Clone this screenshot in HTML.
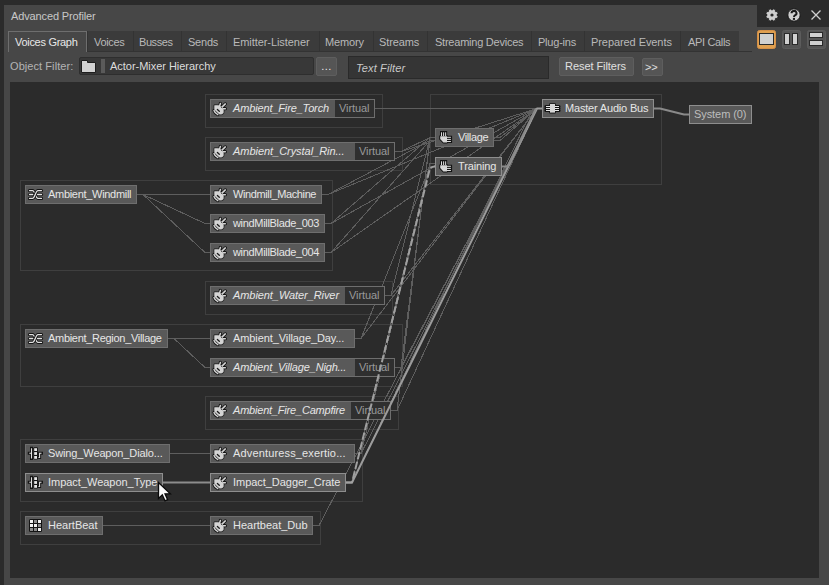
<!DOCTYPE html>
<html><head><meta charset="utf-8"><style>
html,body{margin:0;padding:0;}
body{width:829px;height:585px;overflow:hidden;background:#2b2b2b;position:relative;font-family:"Liberation Sans", sans-serif;}
.a{position:absolute;}
.t{font-size:11px;white-space:nowrap;}
</style></head><body>
<div class="a" style="left:4px;top:5px;width:753px;height:22px;background:#474747;"></div>
<div class="a" style="left:4px;top:27px;width:825px;height:558px;background:#474747;"></div>
<div class="a t" style="left:11px;top:9.19px;font-size:11px;line-height:14px;color:#c8c8c8;letter-spacing:-0.133px;">Advanced Profiler</div>
<svg class="a" style="left:757px;top:0px" width="72" height="27" viewBox="757 0 72 27">
<g fill="#cfcfcf" stroke="#1e1e1e" stroke-width="0.8">
<path d="M776.98 15.41 L778.18 16.21 L777.23 18.52 L775.82 18.23 L775.23 18.82 L775.52 20.23 L773.21 21.18 L772.41 19.98 L771.59 19.98 L770.79 21.18 L768.48 20.23 L768.77 18.82 L768.18 18.23 L766.77 18.52 L765.82 16.21 L767.02 15.41 L767.02 14.59 L765.82 13.79 L766.77 11.48 L768.18 11.77 L768.77 11.18 L768.48 9.77 L770.79 8.82 L771.59 10.02 L772.41 10.02 L773.21 8.82 L775.52 9.77 L775.23 11.18 L775.82 11.77 L777.23 11.48 L778.18 13.79 L776.98 14.59Z"/>
</g>
<circle cx="772" cy="15" r="1.6" fill="#2a2a2a"/>
<circle cx="794" cy="15" r="6.2" fill="#cfcfcf" stroke="#141414" stroke-width="1"/>
<path d="M791.5 13.2a2.5 2.3 0 1 1 3.5 2.1c-.7.4-1 .8-1 1.6" fill="none" stroke="#1a1a1a" stroke-width="2"/>
<rect x="792.9" y="17.9" width="2.1" height="2" fill="#1a1a1a"/>
<path d="M811.5 10.5l9 9M820.5 10.5l-9 9" stroke="#d0d0d0" stroke-width="1.3"/>
</svg>
<div class="a" style="left:87px;top:31px;width:46px;height:20px;background:#3b3b3b;border-left:1px solid #333;box-sizing:border-box;"></div>
<div class="a t" style="left:94px;top:35.19px;font-size:11px;line-height:14px;color:#b9b9b9;letter-spacing:-0.324px;">Voices</div>
<div class="a" style="left:133px;top:31px;width:48px;height:20px;background:#3b3b3b;border-left:1px solid #333;box-sizing:border-box;"></div>
<div class="a t" style="left:139px;top:35.19px;font-size:11px;line-height:14px;color:#b9b9b9;letter-spacing:-0.416px;">Busses</div>
<div class="a" style="left:181px;top:31px;width:45px;height:20px;background:#3b3b3b;border-left:1px solid #333;box-sizing:border-box;"></div>
<div class="a t" style="left:188px;top:35.19px;font-size:11px;line-height:14px;color:#b9b9b9;letter-spacing:-0.226px;">Sends</div>
<div class="a" style="left:226px;top:31px;width:93px;height:20px;background:#3b3b3b;border-left:1px solid #333;box-sizing:border-box;"></div>
<div class="a t" style="left:233px;top:35.19px;font-size:11px;line-height:14px;color:#b9b9b9;letter-spacing:-0.069px;">Emitter-Listener</div>
<div class="a" style="left:319px;top:31px;width:54px;height:20px;background:#3b3b3b;border-left:1px solid #333;box-sizing:border-box;"></div>
<div class="a t" style="left:325px;top:35.19px;font-size:11px;line-height:14px;color:#b9b9b9;letter-spacing:-0.167px;">Memory</div>
<div class="a" style="left:373px;top:31px;width:54px;height:20px;background:#3b3b3b;border-left:1px solid #333;box-sizing:border-box;"></div>
<div class="a t" style="left:379px;top:35.19px;font-size:11px;line-height:14px;color:#b9b9b9;letter-spacing:-0.111px;">Streams</div>
<div class="a" style="left:427px;top:31px;width:104px;height:20px;background:#3b3b3b;border-left:1px solid #333;box-sizing:border-box;"></div>
<div class="a t" style="left:435px;top:35.19px;font-size:11px;line-height:14px;color:#b9b9b9;letter-spacing:-0.233px;">Streaming Devices</div>
<div class="a" style="left:531px;top:31px;width:53px;height:20px;background:#3b3b3b;border-left:1px solid #333;box-sizing:border-box;"></div>
<div class="a t" style="left:538px;top:35.19px;font-size:11px;line-height:14px;color:#b9b9b9;letter-spacing:-0.221px;">Plug-ins</div>
<div class="a" style="left:584px;top:31px;width:96px;height:20px;background:#3b3b3b;border-left:1px solid #333;box-sizing:border-box;"></div>
<div class="a t" style="left:591px;top:35.19px;font-size:11px;line-height:14px;color:#b9b9b9;letter-spacing:-0.074px;">Prepared Events</div>
<div class="a" style="left:680px;top:31px;width:59px;height:20px;background:#3b3b3b;border-left:1px solid #333;box-sizing:border-box;"></div>
<div class="a t" style="left:688px;top:35.19px;font-size:11px;line-height:14px;color:#b9b9b9;letter-spacing:-0.344px;">API Calls</div>
<div class="a" style="left:8px;top:51px;width:744px;height:1px;background:#333;"></div>
<div class="a" style="left:8px;top:31px;width:79px;height:21px;background:#474747;border:1px solid #6e6e6e;border-bottom:none;box-sizing:border-box;"></div>
<div class="a t" style="left:15px;top:35.19px;font-size:11px;line-height:14px;color:#e8e8e8;letter-spacing:-0.295px;">Voices Graph</div>
<svg class="a" style="left:756px;top:29px" width="72" height="22" viewBox="756 29 72 22">
<rect x="757.5" y="30.5" width="18" height="18" rx="2" fill="#e0a050" stroke="#d49048"/>
<rect x="759.5" y="33.5" width="14" height="11" fill="#d0d0d0" stroke="#2a2a2a" stroke-width="1"/>
<rect x="782.5" y="30.5" width="18" height="18" rx="2" fill="#555" stroke="#5c5c5c"/>
<rect x="784.5" y="33.5" width="5" height="11" fill="#d0d0d0" stroke="#2a2a2a"/>
<rect x="792.5" y="33.5" width="5" height="11" fill="#d0d0d0" stroke="#2a2a2a"/>
<rect x="807.5" y="30.5" width="18" height="18" rx="2" fill="#555" stroke="#5c5c5c"/>
<rect x="809.5" y="32.5" width="13" height="5" fill="#d0d0d0" stroke="#2a2a2a"/>
<rect x="809.5" y="40.5" width="13" height="5" fill="#d0d0d0" stroke="#2a2a2a"/>
</svg>
<div class="a t" style="left:10px;top:59.19px;font-size:11px;line-height:14px;color:#b4b4b4;letter-spacing:0.069px;">Object Filter:</div>
<div class="a" style="left:79px;top:57px;width:235px;height:18px;background:#383838;border:1px solid #2e2e2e;box-sizing:border-box;border-radius:2px;"></div>
<svg class="a" style="left:80px;top:59px" width="18" height="16" viewBox="80 59 18 16">
<path d="M81.5 60.5H87.5V62.5H95.5V72.5H81.5Z" fill="#d2d2d2" stroke="#1e1e1e" stroke-width="1"/>
</svg>
<div class="a" style="left:101px;top:59px;width:4px;height:14px;background:#5a5a5a;"></div>
<div class="a t" style="left:110px;top:59.19px;font-size:11px;line-height:14px;color:#dcdcdc;letter-spacing:-0.028px;">Actor-Mixer Hierarchy</div>
<div class="a" style="left:316px;top:57px;width:21px;height:19px;background:#555;border:1px solid #5e5e5e;box-sizing:border-box;border-radius:2px;"></div>
<div class="a t" style="left:316px;top:57px;width:21px;height:19px;line-height:19px;text-align:center;color:#e8e8e8;font-size:11px;letter-spacing:0.5px">...</div>
<div class="a" style="left:348px;top:56px;width:201px;height:23px;background:#353535;border:1px solid #2a2a2a;box-sizing:border-box;"></div>
<div class="a t" style="left:356px;top:61.19px;font-size:11px;line-height:14px;color:#c8c8c8;font-style:italic;letter-spacing:0.121px;">Text Filter</div>
<div class="a" style="left:559px;top:57px;width:75px;height:19px;background:#555;border:1px solid #5e5e5e;box-sizing:border-box;border-radius:2px;"></div>
<div class="a t" style="left:565px;top:59.19px;font-size:11px;line-height:14px;color:#e0e0e0;letter-spacing:-0.062px;">Reset Filters</div>
<div class="a" style="left:642px;top:58px;width:21px;height:18px;background:#555;border:1px solid #5e5e5e;box-sizing:border-box;border-radius:2px;"></div>
<div class="a t" style="left:645px;top:60.19px;font-size:11px;line-height:14px;color:#e0e0e0;letter-spacing:-0.2px;">&gt;&gt;</div>
<div class="a" style="left:10px;top:82px;width:809px;height:496px;background:#2b2b2b;"></div>
<div class="a" style="left:205px;top:94px;width:178px;height:34px;border:1px solid #3f3f3f;box-sizing:border-box;"></div>
<div class="a" style="left:205px;top:137px;width:198px;height:34px;border:1px solid #3f3f3f;box-sizing:border-box;"></div>
<div class="a" style="left:20px;top:180px;width:313px;height:91px;border:1px solid #3f3f3f;box-sizing:border-box;"></div>
<div class="a" style="left:205px;top:281px;width:188px;height:34px;border:1px solid #3f3f3f;box-sizing:border-box;"></div>
<div class="a" style="left:20px;top:324px;width:383px;height:63px;border:1px solid #3f3f3f;box-sizing:border-box;"></div>
<div class="a" style="left:205px;top:396px;width:194px;height:34px;border:1px solid #3f3f3f;box-sizing:border-box;"></div>
<div class="a" style="left:20px;top:439px;width:343px;height:63px;border:1px solid #3f3f3f;box-sizing:border-box;"></div>
<div class="a" style="left:20px;top:511px;width:301px;height:34px;border:1px solid #3f3f3f;box-sizing:border-box;"></div>
<div class="a" style="left:430px;top:94px;width:232px;height:91px;border:1px solid #3f3f3f;box-sizing:border-box;"></div>
<svg class="a" style="left:0;top:0" width="829" height="585"><g fill="none" stroke="#5e5e5e" stroke-width="1" shape-rendering="crispEdges"><path d="M375 108.5H381L537 108.5H542"/><path d="M395 151.5H401L537 108.5H542"/><path d="M322 194.5H328L537 108.5H542"/><path d="M325 223.5H331L537 108.5H542"/><path d="M325 252.5H331L537 108.5H542"/><path d="M385 295.5H391L537 108.5H542"/><path d="M355 338.5H361L537 108.5H542"/><path d="M395 367.5H401L537 108.5H542"/><path d="M391 410.5H397L537 108.5H542"/><path d="M355 453.5H361L537 108.5H542"/><path d="M313 525.5H319L537 108.5H542"/><path d="M395 151.5H401L430 137.5H435"/><path d="M322 194.5H328L430 140.5H435"/><path d="M325 223.5H331L430 137.5H435"/><path d="M325 252.5H331L430 140.5H435"/><path d="M385 295.5H391L430 137.5H435"/><path d="M395 367.5H401L430 140.5H435"/><path d="M391 410.5H397L430 137.5H435"/><path d="M355 338.5H361L430 166.5H435"/><path d="M355 453.5H361L430 166.5H435"/><path d="M346 482.5H352L533 108.5H538"/><path d="M346 482.5H352L430 163.5H435"/><path d="M494 137.5H500L537 108.5"/><path d="M494 140.5H500L537 108.5"/><path d="M137 194.5H143L205 194.5H210"/><path d="M137 194.5H143L205 223.5H210"/><path d="M137 194.5H143L205 252.5H210"/><path d="M168 338.5H174L205 338.5H210"/><path d="M168 338.5H174L205 367.5H210"/><path d="M170 453.5H176L205 453.5H210"/><path d="M103 525.5H109L205 525.5H210"/></g></svg>
<div class="a" style="left:210px;top:99px;width:165px;height:19px;background:#595959;border:1px solid #6e6e6e;box-sizing:border-box;"></div>
<div class="a" style="left:335px;top:100px;width:39px;height:17px;background:#2f2f2f;"></div>
<div class="a t" style="left:339px;top:101.19px;font-size:11px;line-height:14px;color:#9a9a9a;letter-spacing:-0.081px;">Virtual</div>
<svg class="a" style="left:210px;top:99px" width="20" height="19" viewBox="0 0 20 19"><g stroke="#141414" stroke-width="3.3" stroke-linecap="round" fill="none"><path d="M9.4 7.6L10.4 4.5M11.7 8.4L15.3 4.9M12 9.8L15.3 9.7M4 11.6Q4.9 14.4 7.8 15.6"/></g>
<path d="M4.6 6.6L8.8 6.4L12.6 9L13.4 11.5L13.2 14.2L11.2 15.2L9.2 15L4.6 10.6Z" fill="#141414" stroke="#141414" stroke-width="2" stroke-linejoin="round"/>
<path d="M4.6 6.6L8.8 6.4L12.6 9L13.4 11.5L13.2 14.2L11.2 15.2L9.2 15L4.6 10.6Z" fill="#d4d4d4" stroke="#d4d4d4" stroke-width="0.6" stroke-linejoin="round"/>
<g stroke="#d4d4d4" stroke-width="1.5" stroke-linecap="round" fill="none"><path d="M9.4 7.6L10.4 4.5M11.7 8.4L15.3 4.9M12 9.8L15.3 9.7M4 11.6Q4.9 14.4 7.8 15.6"/></g>
<path d="M7.4 10.5L9.3 12.3" stroke="#1a1a1a" stroke-width="1.3" stroke-linecap="round"/>
<path d="M11.2 8.2L12.2 9.1" stroke="#141414" stroke-width="0.8"/></svg>
<div class="a t" style="left:233px;top:101.19px;font-size:11px;line-height:14px;color:#e6e6e6;font-style:italic;letter-spacing:-0.149px;">Ambient_Fire_Torch</div>
<div class="a" style="left:210px;top:142px;width:185px;height:19px;background:#595959;border:1px solid #6e6e6e;box-sizing:border-box;"></div>
<div class="a" style="left:355px;top:143px;width:39px;height:17px;background:#2f2f2f;"></div>
<div class="a t" style="left:359px;top:144.19px;font-size:11px;line-height:14px;color:#9a9a9a;letter-spacing:-0.081px;">Virtual</div>
<svg class="a" style="left:210px;top:142px" width="20" height="19" viewBox="0 0 20 19"><g stroke="#141414" stroke-width="3.3" stroke-linecap="round" fill="none"><path d="M9.4 7.6L10.4 4.5M11.7 8.4L15.3 4.9M12 9.8L15.3 9.7M4 11.6Q4.9 14.4 7.8 15.6"/></g>
<path d="M4.6 6.6L8.8 6.4L12.6 9L13.4 11.5L13.2 14.2L11.2 15.2L9.2 15L4.6 10.6Z" fill="#141414" stroke="#141414" stroke-width="2" stroke-linejoin="round"/>
<path d="M4.6 6.6L8.8 6.4L12.6 9L13.4 11.5L13.2 14.2L11.2 15.2L9.2 15L4.6 10.6Z" fill="#d4d4d4" stroke="#d4d4d4" stroke-width="0.6" stroke-linejoin="round"/>
<g stroke="#d4d4d4" stroke-width="1.5" stroke-linecap="round" fill="none"><path d="M9.4 7.6L10.4 4.5M11.7 8.4L15.3 4.9M12 9.8L15.3 9.7M4 11.6Q4.9 14.4 7.8 15.6"/></g>
<path d="M7.4 10.5L9.3 12.3" stroke="#1a1a1a" stroke-width="1.3" stroke-linecap="round"/>
<path d="M11.2 8.2L12.2 9.1" stroke="#141414" stroke-width="0.8"/></svg>
<div class="a t" style="left:233px;top:144.19px;font-size:11px;line-height:14px;color:#e6e6e6;font-style:italic;letter-spacing:-0.043px;">Ambient_Crystal_Rin...</div>
<div class="a" style="left:210px;top:185px;width:112px;height:19px;background:#595959;border:1px solid #6e6e6e;box-sizing:border-box;"></div>
<svg class="a" style="left:210px;top:185px" width="20" height="19" viewBox="0 0 20 19"><g stroke="#141414" stroke-width="3.3" stroke-linecap="round" fill="none"><path d="M9.4 7.6L10.4 4.5M11.7 8.4L15.3 4.9M12 9.8L15.3 9.7M4 11.6Q4.9 14.4 7.8 15.6"/></g>
<path d="M4.6 6.6L8.8 6.4L12.6 9L13.4 11.5L13.2 14.2L11.2 15.2L9.2 15L4.6 10.6Z" fill="#141414" stroke="#141414" stroke-width="2" stroke-linejoin="round"/>
<path d="M4.6 6.6L8.8 6.4L12.6 9L13.4 11.5L13.2 14.2L11.2 15.2L9.2 15L4.6 10.6Z" fill="#d4d4d4" stroke="#d4d4d4" stroke-width="0.6" stroke-linejoin="round"/>
<g stroke="#d4d4d4" stroke-width="1.5" stroke-linecap="round" fill="none"><path d="M9.4 7.6L10.4 4.5M11.7 8.4L15.3 4.9M12 9.8L15.3 9.7M4 11.6Q4.9 14.4 7.8 15.6"/></g>
<path d="M7.4 10.5L9.3 12.3" stroke="#1a1a1a" stroke-width="1.3" stroke-linecap="round"/>
<path d="M11.2 8.2L12.2 9.1" stroke="#141414" stroke-width="0.8"/></svg>
<div class="a t" style="left:233px;top:187.19px;font-size:11px;line-height:14px;color:#e6e6e6;letter-spacing:-0.384px;">Windmill_Machine</div>
<div class="a" style="left:210px;top:214px;width:115px;height:19px;background:#595959;border:1px solid #6e6e6e;box-sizing:border-box;"></div>
<svg class="a" style="left:210px;top:214px" width="20" height="19" viewBox="0 0 20 19"><g stroke="#141414" stroke-width="3.3" stroke-linecap="round" fill="none"><path d="M9.4 7.6L10.4 4.5M11.7 8.4L15.3 4.9M12 9.8L15.3 9.7M4 11.6Q4.9 14.4 7.8 15.6"/></g>
<path d="M4.6 6.6L8.8 6.4L12.6 9L13.4 11.5L13.2 14.2L11.2 15.2L9.2 15L4.6 10.6Z" fill="#141414" stroke="#141414" stroke-width="2" stroke-linejoin="round"/>
<path d="M4.6 6.6L8.8 6.4L12.6 9L13.4 11.5L13.2 14.2L11.2 15.2L9.2 15L4.6 10.6Z" fill="#d4d4d4" stroke="#d4d4d4" stroke-width="0.6" stroke-linejoin="round"/>
<g stroke="#d4d4d4" stroke-width="1.5" stroke-linecap="round" fill="none"><path d="M9.4 7.6L10.4 4.5M11.7 8.4L15.3 4.9M12 9.8L15.3 9.7M4 11.6Q4.9 14.4 7.8 15.6"/></g>
<path d="M7.4 10.5L9.3 12.3" stroke="#1a1a1a" stroke-width="1.3" stroke-linecap="round"/>
<path d="M11.2 8.2L12.2 9.1" stroke="#141414" stroke-width="0.8"/></svg>
<div class="a t" style="left:233px;top:216.19px;font-size:11px;line-height:14px;color:#e6e6e6;letter-spacing:-0.327px;">windMillBlade_003</div>
<div class="a" style="left:210px;top:243px;width:115px;height:19px;background:#595959;border:1px solid #6e6e6e;box-sizing:border-box;"></div>
<svg class="a" style="left:210px;top:243px" width="20" height="19" viewBox="0 0 20 19"><g stroke="#141414" stroke-width="3.3" stroke-linecap="round" fill="none"><path d="M9.4 7.6L10.4 4.5M11.7 8.4L15.3 4.9M12 9.8L15.3 9.7M4 11.6Q4.9 14.4 7.8 15.6"/></g>
<path d="M4.6 6.6L8.8 6.4L12.6 9L13.4 11.5L13.2 14.2L11.2 15.2L9.2 15L4.6 10.6Z" fill="#141414" stroke="#141414" stroke-width="2" stroke-linejoin="round"/>
<path d="M4.6 6.6L8.8 6.4L12.6 9L13.4 11.5L13.2 14.2L11.2 15.2L9.2 15L4.6 10.6Z" fill="#d4d4d4" stroke="#d4d4d4" stroke-width="0.6" stroke-linejoin="round"/>
<g stroke="#d4d4d4" stroke-width="1.5" stroke-linecap="round" fill="none"><path d="M9.4 7.6L10.4 4.5M11.7 8.4L15.3 4.9M12 9.8L15.3 9.7M4 11.6Q4.9 14.4 7.8 15.6"/></g>
<path d="M7.4 10.5L9.3 12.3" stroke="#1a1a1a" stroke-width="1.3" stroke-linecap="round"/>
<path d="M11.2 8.2L12.2 9.1" stroke="#141414" stroke-width="0.8"/></svg>
<div class="a t" style="left:233px;top:245.19px;font-size:11px;line-height:14px;color:#e6e6e6;letter-spacing:-0.327px;">windMillBlade_004</div>
<div class="a" style="left:210px;top:286px;width:175px;height:19px;background:#595959;border:1px solid #6e6e6e;box-sizing:border-box;"></div>
<div class="a" style="left:345px;top:287px;width:39px;height:17px;background:#2f2f2f;"></div>
<div class="a t" style="left:349px;top:288.19px;font-size:11px;line-height:14px;color:#9a9a9a;letter-spacing:-0.081px;">Virtual</div>
<svg class="a" style="left:210px;top:286px" width="20" height="19" viewBox="0 0 20 19"><g stroke="#141414" stroke-width="3.3" stroke-linecap="round" fill="none"><path d="M9.4 7.6L10.4 4.5M11.7 8.4L15.3 4.9M12 9.8L15.3 9.7M4 11.6Q4.9 14.4 7.8 15.6"/></g>
<path d="M4.6 6.6L8.8 6.4L12.6 9L13.4 11.5L13.2 14.2L11.2 15.2L9.2 15L4.6 10.6Z" fill="#141414" stroke="#141414" stroke-width="2" stroke-linejoin="round"/>
<path d="M4.6 6.6L8.8 6.4L12.6 9L13.4 11.5L13.2 14.2L11.2 15.2L9.2 15L4.6 10.6Z" fill="#d4d4d4" stroke="#d4d4d4" stroke-width="0.6" stroke-linejoin="round"/>
<g stroke="#d4d4d4" stroke-width="1.5" stroke-linecap="round" fill="none"><path d="M9.4 7.6L10.4 4.5M11.7 8.4L15.3 4.9M12 9.8L15.3 9.7M4 11.6Q4.9 14.4 7.8 15.6"/></g>
<path d="M7.4 10.5L9.3 12.3" stroke="#1a1a1a" stroke-width="1.3" stroke-linecap="round"/>
<path d="M11.2 8.2L12.2 9.1" stroke="#141414" stroke-width="0.8"/></svg>
<div class="a t" style="left:233px;top:288.19px;font-size:11px;line-height:14px;color:#e6e6e6;font-style:italic;letter-spacing:-0.073px;">Ambient_Water_River</div>
<div class="a" style="left:210px;top:329px;width:145px;height:19px;background:#595959;border:1px solid #6e6e6e;box-sizing:border-box;"></div>
<svg class="a" style="left:210px;top:329px" width="20" height="19" viewBox="0 0 20 19"><g stroke="#141414" stroke-width="3.3" stroke-linecap="round" fill="none"><path d="M9.4 7.6L10.4 4.5M11.7 8.4L15.3 4.9M12 9.8L15.3 9.7M4 11.6Q4.9 14.4 7.8 15.6"/></g>
<path d="M4.6 6.6L8.8 6.4L12.6 9L13.4 11.5L13.2 14.2L11.2 15.2L9.2 15L4.6 10.6Z" fill="#141414" stroke="#141414" stroke-width="2" stroke-linejoin="round"/>
<path d="M4.6 6.6L8.8 6.4L12.6 9L13.4 11.5L13.2 14.2L11.2 15.2L9.2 15L4.6 10.6Z" fill="#d4d4d4" stroke="#d4d4d4" stroke-width="0.6" stroke-linejoin="round"/>
<g stroke="#d4d4d4" stroke-width="1.5" stroke-linecap="round" fill="none"><path d="M9.4 7.6L10.4 4.5M11.7 8.4L15.3 4.9M12 9.8L15.3 9.7M4 11.6Q4.9 14.4 7.8 15.6"/></g>
<path d="M7.4 10.5L9.3 12.3" stroke="#1a1a1a" stroke-width="1.3" stroke-linecap="round"/>
<path d="M11.2 8.2L12.2 9.1" stroke="#141414" stroke-width="0.8"/></svg>
<div class="a t" style="left:233px;top:331.19px;font-size:11px;line-height:14px;color:#e6e6e6;letter-spacing:-0.092px;">Ambient_Village_Day...</div>
<div class="a" style="left:210px;top:358px;width:185px;height:19px;background:#595959;border:1px solid #6e6e6e;box-sizing:border-box;"></div>
<div class="a" style="left:355px;top:359px;width:39px;height:17px;background:#2f2f2f;"></div>
<div class="a t" style="left:359px;top:360.19px;font-size:11px;line-height:14px;color:#9a9a9a;letter-spacing:-0.081px;">Virtual</div>
<svg class="a" style="left:210px;top:358px" width="20" height="19" viewBox="0 0 20 19"><g stroke="#141414" stroke-width="3.3" stroke-linecap="round" fill="none"><path d="M9.4 7.6L10.4 4.5M11.7 8.4L15.3 4.9M12 9.8L15.3 9.7M4 11.6Q4.9 14.4 7.8 15.6"/></g>
<path d="M4.6 6.6L8.8 6.4L12.6 9L13.4 11.5L13.2 14.2L11.2 15.2L9.2 15L4.6 10.6Z" fill="#141414" stroke="#141414" stroke-width="2" stroke-linejoin="round"/>
<path d="M4.6 6.6L8.8 6.4L12.6 9L13.4 11.5L13.2 14.2L11.2 15.2L9.2 15L4.6 10.6Z" fill="#d4d4d4" stroke="#d4d4d4" stroke-width="0.6" stroke-linejoin="round"/>
<g stroke="#d4d4d4" stroke-width="1.5" stroke-linecap="round" fill="none"><path d="M9.4 7.6L10.4 4.5M11.7 8.4L15.3 4.9M12 9.8L15.3 9.7M4 11.6Q4.9 14.4 7.8 15.6"/></g>
<path d="M7.4 10.5L9.3 12.3" stroke="#1a1a1a" stroke-width="1.3" stroke-linecap="round"/>
<path d="M11.2 8.2L12.2 9.1" stroke="#141414" stroke-width="0.8"/></svg>
<div class="a t" style="left:233px;top:360.19px;font-size:11px;line-height:14px;color:#e6e6e6;font-style:italic;letter-spacing:-0.173px;">Ambient_Village_Nigh...</div>
<div class="a" style="left:210px;top:401px;width:181px;height:19px;background:#595959;border:1px solid #6e6e6e;box-sizing:border-box;"></div>
<div class="a" style="left:351px;top:402px;width:39px;height:17px;background:#2f2f2f;"></div>
<div class="a t" style="left:355px;top:403.19px;font-size:11px;line-height:14px;color:#9a9a9a;letter-spacing:-0.081px;">Virtual</div>
<svg class="a" style="left:210px;top:401px" width="20" height="19" viewBox="0 0 20 19"><g stroke="#141414" stroke-width="3.3" stroke-linecap="round" fill="none"><path d="M9.4 7.6L10.4 4.5M11.7 8.4L15.3 4.9M12 9.8L15.3 9.7M4 11.6Q4.9 14.4 7.8 15.6"/></g>
<path d="M4.6 6.6L8.8 6.4L12.6 9L13.4 11.5L13.2 14.2L11.2 15.2L9.2 15L4.6 10.6Z" fill="#141414" stroke="#141414" stroke-width="2" stroke-linejoin="round"/>
<path d="M4.6 6.6L8.8 6.4L12.6 9L13.4 11.5L13.2 14.2L11.2 15.2L9.2 15L4.6 10.6Z" fill="#d4d4d4" stroke="#d4d4d4" stroke-width="0.6" stroke-linejoin="round"/>
<g stroke="#d4d4d4" stroke-width="1.5" stroke-linecap="round" fill="none"><path d="M9.4 7.6L10.4 4.5M11.7 8.4L15.3 4.9M12 9.8L15.3 9.7M4 11.6Q4.9 14.4 7.8 15.6"/></g>
<path d="M7.4 10.5L9.3 12.3" stroke="#1a1a1a" stroke-width="1.3" stroke-linecap="round"/>
<path d="M11.2 8.2L12.2 9.1" stroke="#141414" stroke-width="0.8"/></svg>
<div class="a t" style="left:233px;top:403.19px;font-size:11px;line-height:14px;color:#e6e6e6;font-style:italic;letter-spacing:-0.203px;">Ambient_Fire_Campfire</div>
<div class="a" style="left:210px;top:444px;width:145px;height:19px;background:#595959;border:1px solid #6e6e6e;box-sizing:border-box;"></div>
<svg class="a" style="left:210px;top:444px" width="20" height="19" viewBox="0 0 20 19"><g stroke="#141414" stroke-width="3.3" stroke-linecap="round" fill="none"><path d="M9.4 7.6L10.4 4.5M11.7 8.4L15.3 4.9M12 9.8L15.3 9.7M4 11.6Q4.9 14.4 7.8 15.6"/></g>
<path d="M4.6 6.6L8.8 6.4L12.6 9L13.4 11.5L13.2 14.2L11.2 15.2L9.2 15L4.6 10.6Z" fill="#141414" stroke="#141414" stroke-width="2" stroke-linejoin="round"/>
<path d="M4.6 6.6L8.8 6.4L12.6 9L13.4 11.5L13.2 14.2L11.2 15.2L9.2 15L4.6 10.6Z" fill="#d4d4d4" stroke="#d4d4d4" stroke-width="0.6" stroke-linejoin="round"/>
<g stroke="#d4d4d4" stroke-width="1.5" stroke-linecap="round" fill="none"><path d="M9.4 7.6L10.4 4.5M11.7 8.4L15.3 4.9M12 9.8L15.3 9.7M4 11.6Q4.9 14.4 7.8 15.6"/></g>
<path d="M7.4 10.5L9.3 12.3" stroke="#1a1a1a" stroke-width="1.3" stroke-linecap="round"/>
<path d="M11.2 8.2L12.2 9.1" stroke="#141414" stroke-width="0.8"/></svg>
<div class="a t" style="left:233px;top:446.19px;font-size:11px;line-height:14px;color:#e6e6e6;letter-spacing:0.150px;">Adventuress_exertio...</div>
<div class="a" style="left:210px;top:473px;width:136px;height:19px;background:#595959;border:1px solid #8e8e8e;box-sizing:border-box;"></div>
<svg class="a" style="left:210px;top:473px" width="20" height="19" viewBox="0 0 20 19"><g stroke="#141414" stroke-width="3.3" stroke-linecap="round" fill="none"><path d="M9.4 7.6L10.4 4.5M11.7 8.4L15.3 4.9M12 9.8L15.3 9.7M4 11.6Q4.9 14.4 7.8 15.6"/></g>
<path d="M4.6 6.6L8.8 6.4L12.6 9L13.4 11.5L13.2 14.2L11.2 15.2L9.2 15L4.6 10.6Z" fill="#141414" stroke="#141414" stroke-width="2" stroke-linejoin="round"/>
<path d="M4.6 6.6L8.8 6.4L12.6 9L13.4 11.5L13.2 14.2L11.2 15.2L9.2 15L4.6 10.6Z" fill="#d4d4d4" stroke="#d4d4d4" stroke-width="0.6" stroke-linejoin="round"/>
<g stroke="#d4d4d4" stroke-width="1.5" stroke-linecap="round" fill="none"><path d="M9.4 7.6L10.4 4.5M11.7 8.4L15.3 4.9M12 9.8L15.3 9.7M4 11.6Q4.9 14.4 7.8 15.6"/></g>
<path d="M7.4 10.5L9.3 12.3" stroke="#1a1a1a" stroke-width="1.3" stroke-linecap="round"/>
<path d="M11.2 8.2L12.2 9.1" stroke="#141414" stroke-width="0.8"/></svg>
<div class="a t" style="left:233px;top:475.19px;font-size:11px;line-height:14px;color:#e6e6e6;letter-spacing:-0.041px;">Impact_Dagger_Crate</div>
<div class="a" style="left:210px;top:516px;width:103px;height:19px;background:#595959;border:1px solid #6e6e6e;box-sizing:border-box;"></div>
<svg class="a" style="left:210px;top:516px" width="20" height="19" viewBox="0 0 20 19"><g stroke="#141414" stroke-width="3.3" stroke-linecap="round" fill="none"><path d="M9.4 7.6L10.4 4.5M11.7 8.4L15.3 4.9M12 9.8L15.3 9.7M4 11.6Q4.9 14.4 7.8 15.6"/></g>
<path d="M4.6 6.6L8.8 6.4L12.6 9L13.4 11.5L13.2 14.2L11.2 15.2L9.2 15L4.6 10.6Z" fill="#141414" stroke="#141414" stroke-width="2" stroke-linejoin="round"/>
<path d="M4.6 6.6L8.8 6.4L12.6 9L13.4 11.5L13.2 14.2L11.2 15.2L9.2 15L4.6 10.6Z" fill="#d4d4d4" stroke="#d4d4d4" stroke-width="0.6" stroke-linejoin="round"/>
<g stroke="#d4d4d4" stroke-width="1.5" stroke-linecap="round" fill="none"><path d="M9.4 7.6L10.4 4.5M11.7 8.4L15.3 4.9M12 9.8L15.3 9.7M4 11.6Q4.9 14.4 7.8 15.6"/></g>
<path d="M7.4 10.5L9.3 12.3" stroke="#1a1a1a" stroke-width="1.3" stroke-linecap="round"/>
<path d="M11.2 8.2L12.2 9.1" stroke="#141414" stroke-width="0.8"/></svg>
<div class="a t" style="left:233px;top:518.19px;font-size:11px;line-height:14px;color:#e6e6e6;letter-spacing:-0.009px;">Heartbeat_Dub</div>
<div class="a" style="left:25px;top:185px;width:112px;height:19px;background:#595959;border:1px solid #6e6e6e;box-sizing:border-box;"></div>
<svg class="a" style="left:25px;top:185px" width="20" height="19" viewBox="0 0 20 19"><g fill="none" stroke-linecap="round">
<path d="M4.5 9.5H16.5" stroke="#141414" stroke-width="3.2"/><path d="M4.5 9.5H16.5" stroke="#e2e2e2" stroke-width="1.3"/>
<path d="M4.5 5.6H7.5C10 5.6 10.5 13.4 13 13.4H16.5" stroke="#141414" stroke-width="3.2"/><path d="M4.5 5.6H7.5C10 5.6 10.5 13.4 13 13.4H16.5" stroke="#e2e2e2" stroke-width="1.3"/>
<path d="M4.5 13.4H7.5C10 13.4 10.5 5.6 13 5.6H16.5" stroke="#141414" stroke-width="3.2"/><path d="M4.5 13.4H7.5C10 13.4 10.5 5.6 13 5.6H16.5" stroke="#e2e2e2" stroke-width="1.3"/></g></svg>
<div class="a t" style="left:48px;top:187.19px;font-size:11px;line-height:14px;color:#e6e6e6;letter-spacing:-0.302px;">Ambient_Windmill</div>
<div class="a" style="left:25px;top:329px;width:143px;height:19px;background:#595959;border:1px solid #6e6e6e;box-sizing:border-box;"></div>
<svg class="a" style="left:25px;top:329px" width="20" height="19" viewBox="0 0 20 19"><g fill="none" stroke-linecap="round">
<path d="M4.5 9.5H16.5" stroke="#141414" stroke-width="3.2"/><path d="M4.5 9.5H16.5" stroke="#e2e2e2" stroke-width="1.3"/>
<path d="M4.5 5.6H7.5C10 5.6 10.5 13.4 13 13.4H16.5" stroke="#141414" stroke-width="3.2"/><path d="M4.5 5.6H7.5C10 5.6 10.5 13.4 13 13.4H16.5" stroke="#e2e2e2" stroke-width="1.3"/>
<path d="M4.5 13.4H7.5C10 13.4 10.5 5.6 13 5.6H16.5" stroke="#141414" stroke-width="3.2"/><path d="M4.5 13.4H7.5C10 13.4 10.5 5.6 13 5.6H16.5" stroke="#e2e2e2" stroke-width="1.3"/></g></svg>
<div class="a t" style="left:48px;top:331.19px;font-size:11px;line-height:14px;color:#e6e6e6;letter-spacing:-0.299px;">Ambient_Region_Village</div>
<div class="a" style="left:25px;top:444px;width:145px;height:19px;background:#595959;border:1px solid #6e6e6e;box-sizing:border-box;"></div>
<svg class="a" style="left:25px;top:444px" width="20" height="19" viewBox="0 0 20 19"><g stroke="#141414" stroke-width="3" stroke-linecap="square" fill="none"><path d="M6.5 4.3V14.5M4.3 9.3H6.5M13.8 13.5H14.6V9.3H16.5"/></g>
<rect x="8.3" y="3.3" width="4.6" height="12.2" rx="1" fill="#141414"/>
<g stroke="#e2e2e2" stroke-width="1.1" fill="none"><path d="M6.5 4.3V14.5M4.3 9.3H6.5M13.5 13.5H14.6V9.3H16.5"/></g>
<g fill="#e8e8e8"><rect x="9.2" y="4.2" width="2.8" height="2.8"/><rect x="9.2" y="8.1" width="2.8" height="2.8"/><rect x="9.2" y="12" width="2.8" height="2.8"/></g></svg>
<div class="a t" style="left:48px;top:446.19px;font-size:11px;line-height:14px;color:#e6e6e6;letter-spacing:-0.125px;">Swing_Weapon_Dialo...</div>
<div class="a" style="left:25px;top:473px;width:138px;height:19px;background:#595959;border:1px solid #8e8e8e;box-sizing:border-box;"></div>
<svg class="a" style="left:25px;top:473px" width="20" height="19" viewBox="0 0 20 19"><g stroke="#141414" stroke-width="3" stroke-linecap="square" fill="none"><path d="M6.5 4.3V14.5M4.3 9.3H6.5M13.8 13.5H14.6V9.3H16.5"/></g>
<rect x="8.3" y="3.3" width="4.6" height="12.2" rx="1" fill="#141414"/>
<g stroke="#e2e2e2" stroke-width="1.1" fill="none"><path d="M6.5 4.3V14.5M4.3 9.3H6.5M13.5 13.5H14.6V9.3H16.5"/></g>
<g fill="#e8e8e8"><rect x="9.2" y="4.2" width="2.8" height="2.8"/><rect x="9.2" y="8.1" width="2.8" height="2.8"/><rect x="9.2" y="12" width="2.8" height="2.8"/></g></svg>
<div class="a t" style="left:48px;top:475.19px;font-size:11px;line-height:14px;color:#e6e6e6;letter-spacing:-0.022px;">Impact_Weapon_Type</div>
<div class="a" style="left:25px;top:516px;width:78px;height:19px;background:#595959;border:1px solid #6e6e6e;box-sizing:border-box;"></div>
<svg class="a" style="left:25px;top:516px" width="20" height="19" viewBox="0 0 20 19"><rect x="4" y="3" width="13" height="13" rx="1.5" fill="#141414"/>
<g fill="#f2f2f2"><rect x="5" y="4" width="3" height="3"/><rect x="13" y="4" width="3" height="3"/><rect x="5" y="8" width="3" height="3"/><rect x="9" y="8" width="3" height="3"/><rect x="13" y="12" width="3" height="3"/></g>
<g fill="#8a8a8a"><rect x="9" y="4" width="3" height="3"/><rect x="13" y="8" width="3" height="3"/><rect x="5" y="12" width="3" height="3"/><rect x="9" y="12" width="3" height="3"/></g></svg>
<div class="a t" style="left:48px;top:518.19px;font-size:11px;line-height:14px;color:#e6e6e6;letter-spacing:-0.004px;">HeartBeat</div>
<div class="a" style="left:435px;top:128px;width:59px;height:19px;background:#595959;border:1px solid #6e6e6e;box-sizing:border-box;"></div>
<svg class="a" style="left:435px;top:128px" width="20" height="19" viewBox="0 0 20 19"><g stroke="#141414" stroke-width="3" stroke-linecap="square" fill="none"><path d="M6.5 4.6V8M8.6 4.6V8M10.65 4.6V8M12 9.3H15.6M12 11.4H15.6M12 13.5H15.6"/></g><path d="M5.2 8.2H12V14.4H8.4L5.2 11z" fill="#141414" stroke="#141414" stroke-width="2" stroke-linejoin="round"/>
<g stroke="#dcdcdc" stroke-width="1" fill="none"><path d="M6.5 4.3V8M8.6 4.3V8M10.65 4.3V8M12 9.3H15.9M12 11.4H15.9M12 13.5H15.9"/></g>
<path d="M5.2 8.2H12V14.4H8.4L5.2 11z" fill="#d6d6d6"/></svg>
<div class="a t" style="left:458px;top:130.19px;font-size:11px;line-height:14px;color:#e6e6e6;letter-spacing:-0.388px;">Village</div>
<div class="a" style="left:435px;top:157px;width:67px;height:19px;background:#595959;border:1px solid #8e8e8e;box-sizing:border-box;"></div>
<svg class="a" style="left:435px;top:157px" width="20" height="19" viewBox="0 0 20 19"><g stroke="#141414" stroke-width="3" stroke-linecap="square" fill="none"><path d="M6.5 4.6V8M8.6 4.6V8M10.65 4.6V8M12 9.3H15.6M12 11.4H15.6M12 13.5H15.6"/></g><path d="M5.2 8.2H12V14.4H8.4L5.2 11z" fill="#141414" stroke="#141414" stroke-width="2" stroke-linejoin="round"/>
<g stroke="#dcdcdc" stroke-width="1" fill="none"><path d="M6.5 4.3V8M8.6 4.3V8M10.65 4.3V8M12 9.3H15.9M12 11.4H15.9M12 13.5H15.9"/></g>
<path d="M5.2 8.2H12V14.4H8.4L5.2 11z" fill="#d6d6d6"/></svg>
<div class="a t" style="left:458px;top:159.19px;font-size:11px;line-height:14px;color:#e6e6e6;letter-spacing:-0.121px;">Training</div>
<div class="a" style="left:542px;top:99px;width:112px;height:19px;background:#595959;border:1px solid #8e8e8e;box-sizing:border-box;"></div>
<svg class="a" style="left:542px;top:99px" width="20" height="19" viewBox="0 0 20 19"><g stroke="#141414" stroke-width="3.2" stroke-linecap="round"><path d="M3.9 7.5H17M3.9 9.5H17M3.9 11.5H17"/></g>
<rect x="7.2" y="4.2" width="6.6" height="10.3" rx="0.8" fill="#141414"/>
<g stroke="#e6e6e6" stroke-width="1"><path d="M4 7.5H8M4 9.5H8M13 7.5H17M13 9.5H17M4 11.5H8M13 11.5H17"/></g>
<rect x="8" y="5" width="5" height="8.6" fill="#d6d6d6"/></svg>
<div class="a t" style="left:565px;top:101.19px;font-size:11px;line-height:14px;color:#e6e6e6;letter-spacing:-0.181px;">Master Audio Bus</div>
<div class="a" style="left:689px;top:105px;width:63px;height:19px;background:#595959;border:1px solid #8e8e8e;box-sizing:border-box;"></div>
<div class="a t" style="left:694px;top:107.19px;font-size:11px;line-height:14px;color:#bdbdbd;letter-spacing:-0.076px;">System (0)</div>
<svg class="a" style="left:0;top:0" width="829" height="585"><g fill="none" stroke-linejoin="round"><path d="M346 482.5H352L537 108.5H542" stroke="#9c9c9c" stroke-width="2"/><path d="M502 166.5H507.5L536 108.5" stroke="#8a8a8a" stroke-width="2"/><path d="M346 482.5H352L429 172Q430 166.5 435 166.5" stroke="#a0a0a0" stroke-width="2" stroke-dasharray="7.5 2.5"/><path d="M163 482.5H210" stroke="#8c8c8c" stroke-width="2"/><path d="M654 108.5H660L684 114.5H689" stroke="#8a8a8a" stroke-width="2"/></g></svg>
<svg class="a" style="left:157px;top:481px" width="16" height="22" viewBox="0 0 16 22">
<path d="M1.5 1.5V17.5L5.3 13.8L8 19.8L10.6 18.7L8 12.8H13.3z" fill="#fafafa" stroke="#0a0a0a" stroke-width="1.3" stroke-linejoin="miter"/>
</svg>
</body></html>
